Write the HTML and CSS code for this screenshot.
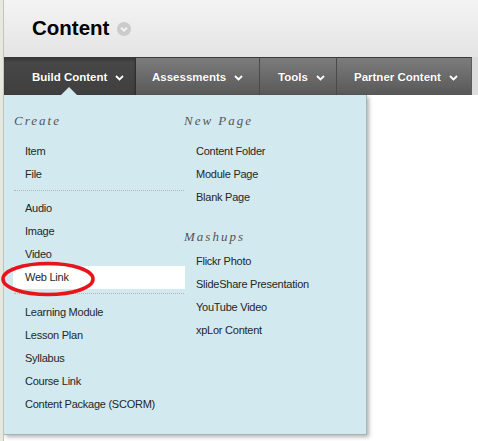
FILE: index.html
```html
<!DOCTYPE html>
<html>
<head>
<meta charset="utf-8">
<link rel="stylesheet" href="styles.css">
</head>
<body>
<div class="page">
  <header class="hdr">
    <h1 class="title">Content</h1>
    <span class="title-ico">
      <svg width="14" height="14" viewBox="0 0 14 14"><circle cx="7" cy="7" r="7" fill="#cbcbcb"/><path d="M4 5.8 L7 8.6 L10 5.8" fill="none" stroke="#f4f4f4" stroke-width="2"/></svg>
    </span>
  </header>
  <nav class="nav">
    <div class="tab tab-active t-build">Build Content<svg class="chev" width="9" height="6" viewBox="0 0 9 6"><path d="M1 1 L4.5 4.5 L8 1" fill="none" stroke="#fff" stroke-width="1.8"/></svg></div>
    <div class="tab t-assess">Assessments<svg class="chev" width="9" height="6" viewBox="0 0 9 6"><path d="M1 1 L4.5 4.5 L8 1" fill="none" stroke="#fff" stroke-width="1.8"/></svg></div>
    <div class="tab t-tools">Tools<svg class="chev" width="9" height="6" viewBox="0 0 9 6"><path d="M1 1 L4.5 4.5 L8 1" fill="none" stroke="#fff" stroke-width="1.8"/></svg></div>
    <div class="tab t-partner">Partner Content<svg class="chev" width="9" height="6" viewBox="0 0 9 6"><path d="M1 1 L4.5 4.5 L8 1" fill="none" stroke="#fff" stroke-width="1.8"/></svg></div>
    <div class="nav-rest"></div>
  </nav>
  <div class="body">
    <div class="menu">
      <span class="pointer"></span>
      <div class="col col-left">
        <div class="mhead">Create</div>
        <ul class="items">
          <li>Item</li>
          <li>File</li>
          <li class="sep"></li>
          <li>Audio</li>
          <li>Image</li>
          <li>Video</li>
          <li class="hl">Web Link</li>
          <li class="sep sep2"></li>
          <li>Learning Module</li>
          <li>Lesson Plan</li>
          <li>Syllabus</li>
          <li>Course Link</li>
          <li>Content Package (SCORM)</li>
        </ul>
      </div>
      <div class="col col-right">
        <div class="mhead">New Page</div>
        <ul class="items">
          <li>Content Folder</li>
          <li>Module Page</li>
          <li>Blank Page</li>
        </ul>
        <div class="mhead mhead2">Mashups</div>
        <ul class="items">
          <li>Flickr Photo</li>
          <li>SlideShare Presentation</li>
          <li>YouTube Video</li>
          <li>xpLor Content</li>
        </ul>
      </div>
    </div>
    <svg class="annot" width="100" height="40" viewBox="0 0 100 40"><ellipse cx="48" cy="18" rx="45" ry="15.5" fill="none" stroke="#e8141c" stroke-width="3.6"/></svg>
  </div>
</div>
</body>
</html>
```
FILE: styles.css
```css
html, body {
  margin: 0;
  padding: 0;
  background: #fff;
}
body {
  width: 478px;
  height: 441px;
  overflow: hidden;
  font-family: "Liberation Sans", Arial, sans-serif;
}
.page {
  height: 441px;
  border-left: 3px solid #e8e9de;
  position: relative;
}
.page::before {
  content: "";
  position: absolute;
  left: 0;
  top: 0;
  bottom: 0;
  width: 1px;
  background: #c2c3ba;
  z-index: 3;
}
.hdr {
  height: 57px;
  box-sizing: border-box;
  padding: 16px 0 0 29px;
  display: flex;
  align-items: flex-start;
  background: linear-gradient(#f4f4f4, #e4e4e4);
}
.title {
  margin: 0;
  font-size: 20.5px;
  line-height: 24px;
  font-weight: bold;
  color: #000;
}
.title-ico {
  display: block;
  margin: 6px 0 0 8px;
  line-height: 0;
}
.nav {
  height: 38px;
  display: flex;
  background: #dedede;
}
.tab {
  box-sizing: border-box;
  height: 38px;
  display: flex;
  align-items: center;
  color: #fff;
  font-size: 11.5px;
  font-weight: bold;
  border-top: 1px solid #3a3a3a;
  border-right: 1px solid #4a4a4a;
  background: linear-gradient(#7c7c7c, #585858);
  text-shadow: 0 0 1px rgba(0,0,0,0.3);
}
.tab-active {
  background: linear-gradient(#484848, #3f3f3f);
  border-right-color: #2f2f2f;
  box-shadow: inset 0 2px 3px rgba(0,0,0,0.25);
}
.chev {
  margin-left: 8px;
  margin-top: 2px;
}
.t-build { width: 133px; padding-left: 29px; }
.t-assess { width: 124px; padding-left: 16px; }
.t-tools { width: 77px; padding-left: 18px; }
.t-partner { width: 135px; padding-left: 17px; border-right: 1px solid #5a5a5a; }
.nav-rest {
  flex: 1;
  background: #dcdcdc;
}
.body {
  position: relative;
  height: 346px;
}
.menu {
  position: absolute;
  left: 1px;
  top: 0;
  width: 363px;
  box-sizing: border-box;
  padding: 16px 0 18px 9px;
  display: flex;
  background: #d2e9ef;
  border-right: 1px solid #a9b3b6;
  border-bottom: 1px solid #a9b3b6;
  box-shadow: 2px 2px 4px rgba(0,0,0,0.3);
  z-index: 2;
}
.pointer {
  position: absolute;
  left: 57px;
  top: -8px;
  width: 0;
  height: 0;
  border-left: 8px solid transparent;
  border-right: 8px solid transparent;
  border-bottom: 8px solid #d2e9ef;
}
.col-left {
  width: 171px;
}
.col-right {
  flex: 1;
}
.mhead {
  font-family: "Liberation Serif", "Times New Roman", serif;
  font-style: italic;
  font-size: 13px;
  letter-spacing: 2px;
  line-height: 20px;
  color: #555;
  margin-bottom: 9px;
}
.col-left .mhead {
  padding-left: 1px;
}
.mhead2 {
  margin-top: 18px;
  margin-bottom: 3px;
}
.items {
  list-style: none;
  margin: 0;
  padding: 0;
}
.items li {
  height: 23px;
  line-height: 23px;
  padding-left: 12px;
  font-size: 11px;
  letter-spacing: -0.25px;
  color: #262626;
  white-space: nowrap;
}
.items li.hl {
  background: #fff;
  margin-right: -1px;
}
.items li.sep {
  height: 0;
  padding: 0;
  margin: 4px 0 6px 1px;
  border-top: 1px dotted #b2b7b9;
}
.items li.sep2 {
  margin-bottom: 7px;
}
.annot {
  position: absolute;
  left: -3px;
  top: 166px;
  z-index: 4;
}
```
